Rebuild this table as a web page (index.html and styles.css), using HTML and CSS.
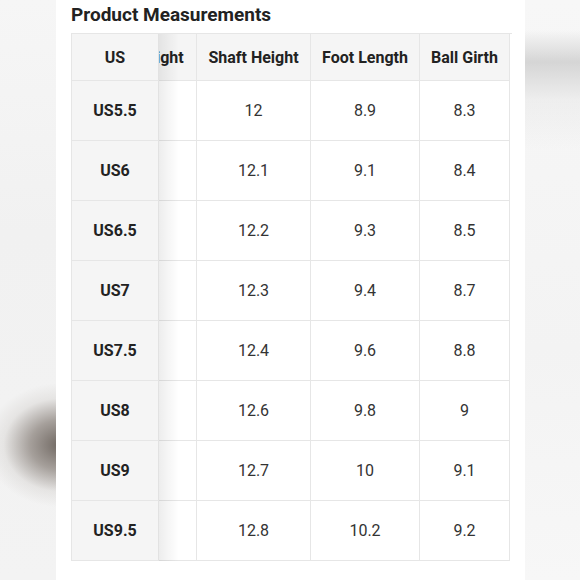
FILE: index.html
```html
<!DOCTYPE html>
<html>
<head>
<meta charset="utf-8">
<link rel="stylesheet" href="styles.css">
</head>
<body>
<div class="page">
  <div class="bg-left"></div>
  <main class="panel">
    <h2 class="title">Product Measurements</h2>
    <div class="table">
      <div class="col-fixed">
        <div class="cell head">US</div>
        <div class="cell key">US5.5</div>
        <div class="cell key">US6</div>
        <div class="cell key">US6.5</div>
        <div class="cell key">US7</div>
        <div class="cell key">US7.5</div>
        <div class="cell key">US8</div>
        <div class="cell key">US9</div>
        <div class="cell key">US9.5</div>
      </div>
      <div class="scroller">
        <div class="grid">
          <div class="cell head heel">Heel Height</div><div class="cell head">Shaft Height</div><div class="cell head">Foot Length</div><div class="cell head">Ball Girth</div>
          <div class="cell"></div><div class="cell">12</div><div class="cell">8.9</div><div class="cell">8.3</div>
          <div class="cell"></div><div class="cell">12.1</div><div class="cell">9.1</div><div class="cell">8.4</div>
          <div class="cell"></div><div class="cell">12.2</div><div class="cell">9.3</div><div class="cell">8.5</div>
          <div class="cell"></div><div class="cell">12.3</div><div class="cell">9.4</div><div class="cell">8.7</div>
          <div class="cell"></div><div class="cell">12.4</div><div class="cell">9.6</div><div class="cell">8.8</div>
          <div class="cell"></div><div class="cell">12.6</div><div class="cell">9.8</div><div class="cell">9</div>
          <div class="cell"></div><div class="cell">12.7</div><div class="cell">10</div><div class="cell">9.1</div>
          <div class="cell"></div><div class="cell">12.8</div><div class="cell">10.2</div><div class="cell">9.2</div>
        </div>
      </div>
    </div>
  </main>
  <div class="bg-right"></div>
</div>
</body>
</html>
```

FILE: styles.css
```css
html, body {
  margin: 0;
  padding: 0;
}
body {
  font-family: Roboto, "Liberation Sans", sans-serif;
  background: #f4f4f4;
}
.page {
  display: flex;
  width: 580px;
  height: 580px;
  overflow: hidden;
}
.bg-left {
  width: 56px;
  flex: none;
  background:
    radial-gradient(ellipse 75px 62px at 60px 445px, rgba(112,104,98,1) 0%, rgba(140,132,126,0.75) 40%, rgba(200,196,192,0.3) 75%, rgba(240,240,240,0) 100%),
    linear-gradient(180deg, #f6f6f6 0%, #f1f1f1 40%, #f3f3f3 100%);
}
.bg-right {
  flex: 1;
  background:
    linear-gradient(180deg, rgba(255,255,255,0) 0px, rgba(210,210,210,0.0) 30px, rgba(205,205,205,0.8) 62px, rgba(220,220,220,0.3) 100px, rgba(240,240,240,0) 150px),
    linear-gradient(180deg, #f7f7f7 0%, #f3f3f3 60%, #f7f7f7 100%);
}
.panel {
  width: 469px;
  flex: none;
  background: #ffffff;
  padding: 4px 0 0 15px;
  box-sizing: border-box;
}
.title {
  margin: 0 0 7px;
  font-size: 19px;
  line-height: 22px;
  font-weight: 700;
  color: #222222;
}
.table {
  display: flex;
  width: 440px;
  border-top: 1px solid #e6e6e6;
  border-left: 1px solid #e6e6e6;
}
.col-fixed {
  width: 87px;
  flex: none;
  position: relative;
  z-index: 1;
  display: flex;
  flex-direction: column;
}
.col-fixed::after {
  content: "";
  position: absolute;
  top: 0;
  bottom: 0;
  left: 100%;
  width: 20px;
  background: linear-gradient(90deg, rgba(0,0,0,0.07), rgba(0,0,0,0));
  pointer-events: none;
}
.scroller {
  flex: 1;
  overflow: hidden;
}
.grid {
  display: grid;
  grid-template-columns: 110px 114px 109px 90px;
  margin-left: -72px;
  width: 423px;
}
.cell {
  box-sizing: border-box;
  height: 60px;
  border-right: 1px solid #e6e6e6;
  border-bottom: 1px solid #e6e6e6;
  display: flex;
  align-items: center;
  justify-content: center;
  font-size: 16px;
  color: #333333;
  background: #ffffff;
  white-space: nowrap;
}
.cell.head {
  height: 47px;
  background: #f5f5f5;
  font-weight: 700;
  color: #222222;
}
.cell.key {
  background: #f5f5f5;
  font-weight: 700;
  color: #222222;
}
.col-fixed .cell {
  width: 87px;
  border-right-color: #e2e2e2;
}
```
